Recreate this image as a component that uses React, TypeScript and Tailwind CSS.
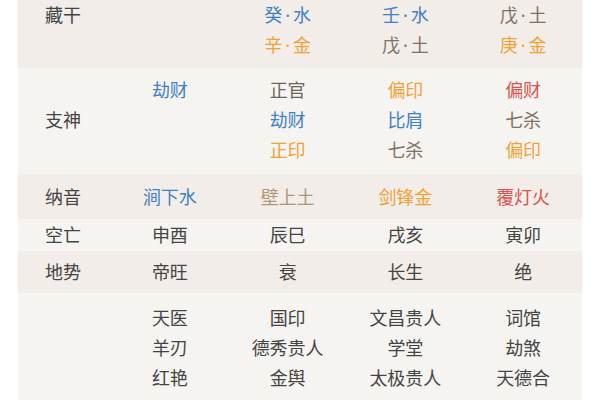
const WATER = "text-[#3f80c6]";
const METAL = "text-[#f0a236]";
const EARTH = "text-[#7f7264]";
const FIRE = "text-[#d9544e]";
const PLAIN = "text-[#444]";

type Cell = { t: string; c: string }[];

type Row = {
  label: string;
  cells: Cell[];
  dark: boolean;
  pad: string;
  labelTop?: boolean;
};

const c = (t: string, cls: string = PLAIN) => ({ t, c: cls });

// top of the chart is scrolled off; 藏干 shows its last two stems only
const ROWS: Row[] = [
  {
    label: "藏干",
    dark: true,
    pad: "h-[68px]",
    labelTop: true,
    cells: [
      [],
      [c("癸·水", WATER), c("辛·金", METAL)],
      [c("壬·水", WATER), c("戊·土", EARTH)],
      [c("戊·土", EARTH), c("庚·金", METAL)],
    ],
  },
  {
    label: "支神",
    dark: false,
    pad: "pt-[7px] pb-[9px]",
    cells: [
      [c("劫财", WATER)],
      [c("正官", "text-[#6f665b]"), c("劫财", WATER), c("正印", METAL)],
      [c("偏印", METAL), c("比肩", WATER), c("七杀", EARTH)],
      [c("偏财", FIRE), c("七杀", EARTH), c("偏印", METAL)],
    ],
  },
  {
    label: "纳音",
    dark: true,
    pad: "h-[45px]",
    cells: [[c("涧下水", WATER)], [c("壁上土", "text-[#b0977a]")], [c("剑锋金", METAL)], [c("覆灯火", FIRE)]],
  },
  {
    label: "空亡",
    dark: false,
    pad: "h-[32px]",
    cells: [[c("申酉")], [c("辰巳")], [c("戌亥")], [c("寅卯")]],
  },
  {
    label: "地势",
    dark: true,
    pad: "h-[42px]",
    cells: [[c("帝旺")], [c("衰")], [c("长生")], [c("绝")]],
  },
  {
    label: "",
    dark: false,
    pad: "pt-[10px] pb-3",
    cells: [
      [c("天医"), c("羊刃"), c("红艳")],
      [c("国印"), c("德秀贵人"), c("金舆")],
      [c("文昌贵人"), c("学堂"), c("太极贵人")],
      [c("词馆"), c("劫煞"), c("天德合")],
    ],
  },
];

function Text({ t }: { t: string }) {
  const parts = t.split("·");
  if (parts.length < 2) return <>{t}</>;
  return (
    <>
      {parts[0]}
      <span className="mx-[3px]">·</span>
      {parts[1]}
    </>
  );
}

export default function App() {
  return (
    <div
      className="h-[400px] w-[600px] overflow-hidden bg-white px-[18px]"
      style={{ fontFamily: '"Noto Sans", "Noto Sans CJK SC", sans-serif' }}
    >
      <div className="flex flex-col text-[18px] leading-[30px]">
        {ROWS.map((row, i) => {
          const single = row.cells.every((x) => x.length === 1);
          return (
            <div
              key={i}
              className={`grid grid-cols-[93px_repeat(4,1fr)] ${row.pad} ${row.dark ? "bg-[#f2ede8]" : "bg-[#f6f4f1]"}`}
            >
              <div className={`flex pl-[27px] text-[#444] ${row.labelTop ? "items-start" : "items-center"}`}>
                {row.label}
              </div>
              {row.cells.map((cell, j) => (
                <div key={j} className={`flex flex-col items-center ${single ? "justify-center" : "justify-start"}`}>
                  {cell.map((it, k) => (
                    <span key={k} className={it.c}>
                      <Text t={it.t} />
                    </span>
                  ))}
                </div>
              ))}
            </div>
          );
        })}
      </div>
    </div>
  );
}
